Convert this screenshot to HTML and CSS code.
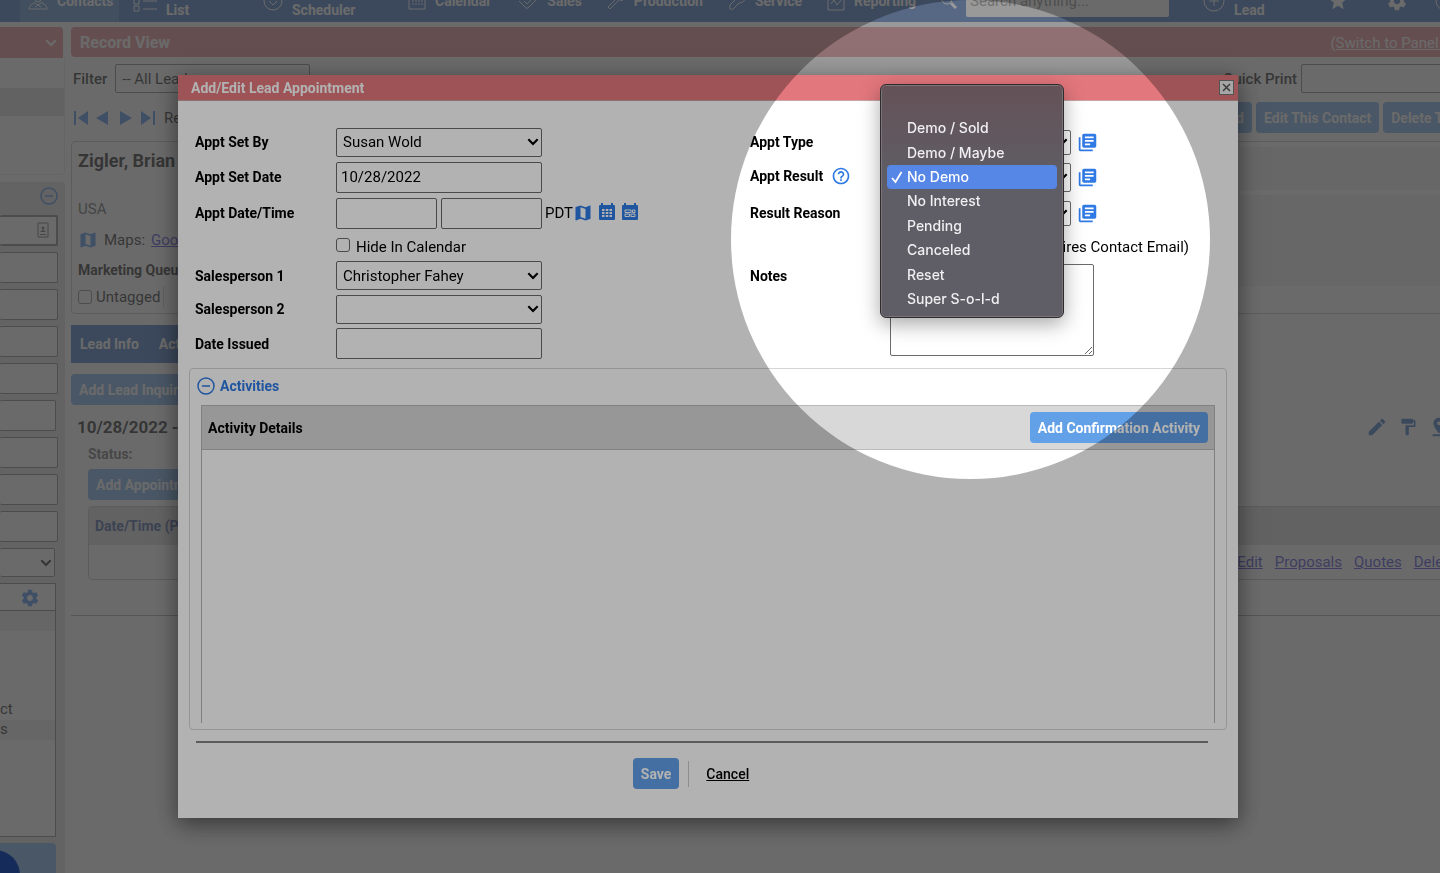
FILE: index.html
```html
<!DOCTYPE html>
<html lang="en">
<head>
  <meta charset="UTF-8">
  <meta name="viewport" content="width=device-width, initial-scale=1.0">
  <title>Record View - Add/Edit Lead Appointment</title>
  <link rel="stylesheet" href="styles.css">
</head>
<body>
  <!-- Icon sprite -->
  <svg class="sprite" aria-hidden="true">
    <symbol id="i-books" viewBox="0 0 24 24"><path d="M4 6H2v14c0 1.1.9 2 2 2h14v-2H4V6zm16-4H8c-1.1 0-2 .9-2 2v12c0 1.1.9 2 2 2h12c1.1 0 2-.9 2-2V4c0-1.1-.9-2-2-2zm-1 9H9V9h10v2zm-4 4H9v-2h6v2zm4-8H9V5h10v2z"/></symbol>
    <symbol id="i-map" viewBox="0 0 24 24"><path d="M20.5 3l-.16.03L15 5.1 9 3 3.36 4.9c-.21.07-.36.25-.36.48V20.5c0 .28.22.5.5.5l.16-.03L9 18.9l6 2.1 5.64-1.9c.21-.07.36-.25.36-.48V3.5c0-.28-.22-.5-.5-.5zM15 19l-6-2.11V5l6 2.11V19z"/></symbol>
    <symbol id="i-edit" viewBox="0 0 24 24"><path d="M3 17.25V21h3.75L17.81 9.94l-3.75-3.75L3 17.25zM20.71 7.04c.39-.39.39-1.02 0-1.41l-2.34-2.34c-.39-.39-1.02-.39-1.41 0l-1.83 1.83 3.75 3.75 1.83-1.83z"/></symbol>
    <symbol id="i-paint" viewBox="0 0 24 24"><path d="M18 4V3c0-.55-.45-1-1-1H5c-.55 0-1 .45-1 1v4c0 .55.45 1 1 1h12c.55 0 1-.45 1-1V6h1v4H9v11c0 .55.45 1 1 1h2c.55 0 1-.45 1-1v-9h8V4h-3z"/></symbol>
    <symbol id="i-pin" viewBox="0 0 24 24"><path d="M18 8c0-3.31-2.69-6-6-6S6 4.69 6 8c0 4.5 6 11 6 11s6-6.500 6-11zm-8 0c0-1.100.9-2 2-2s2 .9 2 2-.89 2-2 2-2-.9-2-2zM5 20v2h14v-2H5z"/></symbol>
    <symbol id="i-help" viewBox="0 0 24 24"><path d="M11 18h2v-2h-2v2zm1-16C6.480 2 2 6.480 2 12s4.480 10 10 10 10-4.480 10-10S17.520 2 12 2zm0 18c-4.410 0-8-3.590-8-8s3.590-8 8-8 8 3.590 8 8-3.590 8-8 8zm0-14c-2.210 0-4 1.790-4 4h2c0-1.100.9-2 2-2s2 .9 2 2c0 2-3 1.750-3 5h2c0-2.250 3-2.500 3-5 0-2.210-1.790-4-4-4z"/></symbol>
    <symbol id="i-gear" viewBox="0 0 24 24"><path d="M19.43 12.98c.04-.32.07-.64.07-.98s-.03-.66-.07-.98l2.110-1.650c.19-.15.24-.42.12-.64l-2-3.460c-.12-.22-.39-.3-.61-.22l-2.490 1c-.52-.4-1.080-.73-1.690-.98l-.38-2.650C14.460 2.180 14.250 2 14 2h-4c-.25 0-.46.18-.49.42l-.38 2.650c-.61.25-1.170.59-1.690.98l-2.490-1c-.23-.09-.49 0-.61.22l-2 3.460c-.13.22-.07.49.12.64l2.110 1.650c-.04.32-.07.65-.07.98s.03.66.07.98l-2.110 1.650c-.19.15-.24.42-.12.64l2 3.460c.12.22.39.3.61.22l2.490-1c.52.4 1.080.73 1.690.98l.38 2.650c.03.24.24.42.49.42h4c.25 0 .46-.18.49-.42l.38-2.650c.61-.25 1.170-.59 1.690-.98l2.490 1c.23.09.49 0 .61-.22l2-3.460c.12-.22.07-.49-.12-.64l-2.110-1.650zM12 15.500c-1.930 0-3.500-1.570-3.500-3.500s1.570-3.500 3.500-3.500 3.500 1.570 3.500 3.500-1.570 3.500-3.500 3.500z"/></symbol>
    <symbol id="i-star" viewBox="0 0 24 24"><path d="M12 17.27L18.18 21l-1.640-7.030L22 9.240l-7.190-.61L12 2 9.190 8.630 2 9.240l5.460 4.730L5.820 21z"/></symbol>
    <symbol id="i-chevron" viewBox="0 0 12 12"><path d="M2.500 4L6 7.500 9.500 4" fill="none" stroke="currentColor" stroke-width="1.600"/></symbol>
    <symbol id="i-minus" viewBox="0 0 18 18"><path d="M5 9h8M9 1a8 8 0 1 0 0 16 8 8 0 1 0 0-16z" fill="none" stroke="currentColor" stroke-width="1.500"/></symbol>
    <symbol id="i-cal" viewBox="0 0 18 18"><path fill-rule="evenodd" d="M3 2V0h2v2h8V0h2v2h1q1 0 1 1v13q0 1-1 1H2q-1 0-1-1V3q0-1 1-1zM4 6v2h2.500V6zm3.800 0v2h2.500V6zm3.700 0v2H14V6zM4 9v2h2.500V9zm3.800 0v2h2.500V9zm3.700 0v2H14V9zM4 12v2h2.500v-2zm3.800 0v2h2.500v-2zm3.700 0v2H14v-2z"/></symbol>
    <symbol id="i-agenda" viewBox="0 0 18 18"><path fill-rule="evenodd" d="M3 2V0h2v2h8V0h2v2h1q1 0 1 1v13q0 1-1 1H2q-1 0-1-1V3q0-1 1-1z"/><path d="M4 7h6v2.500H4zM11.500 7H14v2.500h-2.500zM4 11h4.500v2.500H4zM10 11h4v2.500h-4z" fill="none" stroke="#fff"/></symbol>
    <symbol id="i-check" viewBox="0 0 12 14"><path d="M1 8l3.500 4L10.500 2" fill="none" stroke="currentColor" stroke-width="1.800"/></symbol>
  </svg>

  <div class="app">
    <header class="topnav">
      <div class="logo">G</div>
      <nav class="nav-items">
        <a href="#" class="nav-item active">
          <svg width="20" height="20" viewBox="0 0 20 20"><path d="M7 2v5q0 4 3 4t3-4V2M7 11l-4 3q-2 1-2 4h18q0-3-2-4l-4-3M7 12l6 4M13 12l-6 4"/></svg>Contacts</a>
        <a href="#" class="nav-item two-line list">
          <svg width="24" height="24" viewBox="0 0 24 24"><path d="M1 1h5v5H1zM1 10h5v5H1zM1 17h5v5H1zM10 4h14M10 12h14M10 20h14"/></svg><span>List</span></a>
        <a href="#" class="nav-item two-line scheduler">
          <svg width="20" height="20" viewBox="0 0 20 20"><circle cx="10" cy="10" r="9"/><path d="M6 10l4 4 4-4"/></svg><span>Scheduler</span></a>
        <a href="#" class="nav-item">
          <svg width="18" height="18" viewBox="0 0 18 18"><path d="M1 2h16v15H1z"/><path d="M5 5v9M8 5v9M11 5v9M14 5v9" stroke-dasharray="2 1"/></svg>Calendar</a>
        <a href="#" class="nav-item">
          <svg width="22" height="18" viewBox="0 0 22 18"><path d="M1 6l4-4 6 2 6-2 4 5-9 9q-2 1-3-1L3 9M8 9l3 3 5-5"/></svg>Sales</a>
        <a href="#" class="nav-item">
          <svg width="18" height="18" viewBox="0 0 18 18"><path d="M1 15L11 5l2 2L3 17zM9 3l4-2 4 6-3 2z"/></svg>Production</a>
        <a href="#" class="nav-item">
          <svg width="18" height="18" viewBox="0 0 18 18"><path d="M2 13l7-7q0-5 6-5l-3 4 2 2 3-2q0 6-6 6l-6 6q-2 1-3 0t0-3z"/></svg>Service</a>
        <a href="#" class="nav-item">
          <svg width="18" height="20" viewBox="0 0 18 20"><path d="M1 3h16v16H1zM4 13l3-4 3 5 5-6"/></svg>Reporting</a>
        <span class="search">
          <svg width="16" height="16" viewBox="0 0 16 16"><circle cx="6" cy="6" r="5"/><path d="M10 10l5 5" stroke-width="3"/></svg>
          <input type="text" placeholder="Search anything..." aria-label="Search anything">
        </span>
        <a href="#" class="nav-item two-line lead">
          <svg width="22" height="22" viewBox="0 0 22 22"><circle cx="11" cy="11" r="10"/><path d="M6 11h10M11 6v10"/></svg><span>Lead</span></a>
        <a href="#" class="nav-item solid" aria-label="Favorites"><svg width="22" height="22"><use href="#i-star"/></svg></a>
        <a href="#" class="nav-item solid settings" aria-label="Settings"><svg width="22" height="22"><use href="#i-gear"/></svg></a>
        <a href="#" class="nav-item" aria-label="Support"><svg width="20" height="20" viewBox="0 0 20 20"><circle cx="10" cy="10" r="9"/></svg></a>
      </nav>
    </header>

    <div class="workspace">
      <aside class="sidebar">
        <div class="side-title"><svg width="16" height="16"><use href="#i-chevron"/></svg></div>
        <div class="side-rows">
          <div class="side-row"></div>
          <div class="side-row dark"></div>
        </div>
        <div class="side-form">
          <div class="side-head"><svg width="18" height="18"><use href="#i-minus"/></svg></div>
          <div class="side-first">
            <input type="text" aria-label="Name">
            <svg width="12" height="16" viewBox="0 0 12 16"><path d="M1 1h10v14H1z" fill="none" stroke="currentColor"/><circle cx="6" cy="6" r="1.500"/><path d="M3 10q3-4 6 0zM3 12h6v1H3z"/></svg>
          </div>
          <input type="text" aria-label="Phone">
          <input type="text" aria-label="Email">
          <input type="text" aria-label="Address">
          <input type="text" aria-label="City">
          <input type="text" class="short" aria-label="State">
          <input type="text" aria-label="Zip">
          <input type="text" aria-label="Job">
          <input type="text" aria-label="Source">
          <span class="select side-select"><select aria-label="Status"><option></option></select><svg width="16" height="16"><use href="#i-chevron"/></svg></span>
          <div class="side-list">
            <div class="side-list-head"><svg width="20" height="20"><use href="#i-gear"/></svg></div>
            <div class="line dark"></div>
            <div class="line"></div>
            <div class="line"></div>
            <div class="line"></div>
            <div class="line">ct</div>
            <div class="line dark">s</div>
          </div>
          <button type="button" class="side-button" aria-label="Search"></button>
        </div>
      </aside>

      <main class="record">
        <div class="record-title">
          <h1>Record View</h1>
          <a href="#">(Switch to Panel View)</a>
        </div>
        <div class="filter-row">
          <label for="filter">Filter</label>
          <span class="select filter-select"><select id="filter"><option>-- All Leads --</option></select></span>
          <label for="quick-print" class="push">Quick Print</label>
          <input type="text" id="quick-print">
        </div>
        <div class="toolbar">
          <svg class="pager" width="82" height="16" viewBox="0 0 82 16"><path d="M0 1h2v14H0zM14 1v14L4 8zM34 1v14L22 8zM46 1v14l12-7zM67 1v14l10-7zM79 1h2v14h-2z"/></svg>
          <span>Record</span>
          <button type="button" class="btn push">Add</button>
          <button type="button" class="btn">Edit This Contact</button>
          <button type="button" class="btn">Delete This</button>
        </div>

        <section class="contact-card">
          <div class="contact-info">
            <h2>Zigler, Brian</h2>
            <p class="country">USA</p>
            <p class="maps"><svg width="20" height="20"><use href="#i-map"/></svg>Maps: <a href="#">Google</a></p>
            <p class="queue">Marketing Queue</p>
            <label class="untagged"><input type="checkbox">Untagged</label>
          </div>
          <div class="contact-side">
            <div class="band"></div>
            <div class="band tall"></div>
          </div>
        </section>

        <div class="tabs"><a href="#">Lead Info</a><a href="#">Activities</a></div>
        <button type="button" class="btn">Add Lead Inquiry</button>
        <div class="lead-head">
          <h2>10/28/2022 -</h2>
          <span class="lead-tools">
            <svg width="22" height="22"><use href="#i-edit"/></svg>
            <svg width="20" height="20"><use href="#i-paint"/></svg>
            <svg width="22" height="22"><use href="#i-pin"/></svg>
          </span>
        </div>
        <div class="lead-body">
          <p>Status:</p>
          <button type="button" class="btn">Add Appointment</button>
          <table class="appts">
            <thead><tr><th>Date/Time (PDT)</th><th></th></tr></thead>
            <tbody><tr><td></td><td class="links"><a href="#">Edit</a><a href="#">Proposals</a><a href="#">Quotes</a><a href="#">Delete</a></td></tr></tbody>
          </table>
        </div>
      </main>
    </div>
  </div>

  <!-- Appointment dialog -->
  <div class="overlay">
    <div class="dialog" role="dialog" aria-labelledby="dialog-title">
      <div class="dialog-title">
        <h2 id="dialog-title">Add/Edit Lead Appointment</h2>
        <button type="button" class="close" aria-label="Close"><svg width="9" height="9" viewBox="0 0 9 9"><path d="M1 1l7 7M8 1L1 8" stroke="currentColor" stroke-width="1.500"/></svg></button>
      </div>
      <form>
        <div class="fields">
          <label for="set-by">Appt Set By</label>
          <div class="cell"><span class="select"><select id="set-by"><option>Susan Wold</option></select><svg width="16" height="16"><use href="#i-chevron"/></svg></span></div>
          <label for="appt-type">Appt Type</label>
          <div class="cell"><span class="select small"><select id="appt-type"><option></option></select><svg width="16" height="16"><use href="#i-chevron"/></svg></span><svg class="icon books" width="21" height="21"><use href="#i-books"/></svg></div>

          <label for="set-date">Appt Set Date</label>
          <div class="cell"><input type="text" id="set-date" value="10/28/2022"></div>
          <div class="label-help"><label for="appt-result">Appt Result</label><svg class="icon" width="20" height="20"><use href="#i-help"/></svg></div>
          <div class="cell result">
            <span class="select small tall"><select id="appt-result"><option></option></select><svg width="16" height="16"><use href="#i-chevron"/></svg></span><svg class="icon books" width="21" height="21"><use href="#i-books"/></svg>
            <ul class="menu" role="listbox" aria-label="Appt Result">
              <li role="option"></li>
              <li role="option">Demo / Sold</li>
              <li role="option">Demo / Maybe</li>
              <li role="option" class="selected" aria-selected="true"><svg width="12" height="14"><use href="#i-check"/></svg>No Demo</li>
              <li role="option">No Interest</li>
              <li role="option">Pending</li>
              <li role="option">Canceled</li>
              <li role="option">Reset</li>
              <li role="option">Super S-o-l-d</li>
            </ul>
          </div>

          <label for="appt-date">Appt Date/Time</label>
          <div class="cell">
            <span class="date-pair"><input type="text" id="appt-date"><input type="text" aria-label="Appt time"></span>
            <span class="zone">PDT</span>
            <span class="date-icons">
              <svg class="icon" width="20" height="20"><use href="#i-map"/></svg>
              <svg class="icon" width="18" height="18"><use href="#i-cal"/></svg>
              <svg class="icon" width="18" height="18"><use href="#i-agenda"/></svg>
            </span>
          </div>
          <label for="reason">Result Reason</label>
          <div class="cell"><span class="select small"><select id="reason"><option></option></select><svg width="16" height="16"><use href="#i-chevron"/></svg></span><svg class="icon books" width="21" height="21"><use href="#i-books"/></svg></div>

          <span></span>
          <div class="cell"><label class="check"><input type="checkbox">Hide In Calendar</label></div>
          <span></span>
          <div class="cell"><label class="check"><input type="checkbox">Send Appt Email (Requires Contact Email)</label></div>

          <label for="sales-1">Salesperson 1</label>
          <div class="cell"><span class="select"><select id="sales-1"><option>Christopher Fahey</option></select><svg width="16" height="16"><use href="#i-chevron"/></svg></span></div>
          <label for="notes">Notes</label>
          <div class="cell notes"><textarea id="notes"></textarea></div>

          <label for="sales-2">Salesperson 2</label>
          <div class="cell"><span class="select"><select id="sales-2"><option></option></select><svg width="16" height="16"><use href="#i-chevron"/></svg></span></div>

          <label for="issued" class="first-col">Date Issued</label>
          <div class="cell"><input type="text" id="issued"></div>
        </div>

        <section class="activities">
          <h3><svg width="18" height="18"><use href="#i-minus"/></svg>Activities</h3>
          <div class="details">
            <div class="details-head">
              <span>Activity Details</span>
              <button type="button" class="btn">Add Confirmation Activity</button>
            </div>
          </div>
        </section>

        <div class="actions">
          <button type="submit" class="btn">Save</button>
          <a href="#">Cancel</a>
        </div>
      </form>
    </div>
  </div>

  <button type="button" class="chat" aria-label="Chat"></button>
  <div class="spotlight"></div>
</body>
</html>
```
FILE: styles.css
```css
* {
  box-sizing: border-box;
}
body {
  margin: 0;
  height: 100vh;
  overflow: hidden;
  background: #fff;
  color: #000;
  font-family: Roboto, "Liberation Sans", sans-serif;
  font-size: 15px;
  line-height: 18px;
}
h1, h2, h3, p, ul {
  margin: 0;
  padding: 0;
}
input, select, textarea, button {
  font: inherit;
  color: inherit;
}
input[type="text"], select, textarea {
  display: block;
  width: 100%;
  background: transparent;
  border: 1px solid #6b6b6b;
  border-radius: 2px;
}
input[type="text"] {
  height: 31px;
  padding: 0 4px;
}
input[type="checkbox"] {
  appearance: none;
  width: 14px;
  height: 14px;
  margin: 0;
  border: 1px solid #6b6b6b;
  border-radius: 3px;
}
svg {
  flex: none;
  fill: currentColor;
}
.sprite {
  position: absolute;
  width: 0;
  height: 0;
}
.icon {
  color: #2f7ae5;
}
.push {
  margin-left: auto;
}
.btn {
  height: 31px;
  padding: 0 8px;
  border: 0;
  border-radius: 4px;
  background: #62a0e8;
  color: #fff;
  font-size: 14px;
  font-weight: 700;
  white-space: nowrap;
}
.select {
  position: relative;
  display: block;
  width: 206px;
}
.select select {
  appearance: none;
  height: 29px;
  padding: 0 20px 0 6px;
}
.select svg {
  position: absolute;
  right: 1px;
  top: 50%;
  margin-top: -8px;
  pointer-events: none;
}

/* Top navigation, scrolled partly out of view */
.topnav {
  display: flex;
  height: 48px;
  margin-top: -26px;
  background: #215db7;
  color: #fff;
  font-size: 14px;
  font-weight: 700;
}
.logo {
  width: 10px;
  padding-top: 27px;
  background: #fff;
  color: #26417a;
  font-size: 20px;
  font-style: italic;
  font-weight: 400;
  text-indent: -9px;
  overflow: hidden;
}
.nav-items {
  display: flex;
  flex: 1;
  align-items: center;
  gap: 25px;
  padding: 6px 0 0 11px;
}
.nav-item {
  display: flex;
  flex: none;
  align-items: center;
  gap: 9px;
  color: inherit;
  text-decoration: none;
}
.nav-item svg, .search svg {
  fill: none;
  stroke: currentColor;
  stroke-width: 1;
}
.nav-item.solid svg {
  fill: currentColor;
  stroke: none;
}
.nav-item.active {
  height: 48px;
  width: 99px;
  margin: -6px -11px 0 9px;
  padding: 6px 8px 0;
  background: #3b78c9;
}
.two-line span {
  padding-top: 18px;
}
.list span {
  width: 72px;
}
.scheduler span {
  width: 91px;
}
.lead {
  margin-left: 9px;
}
.lead span {
  width: 68px;
}
.settings {
  margin: 0 2px 0 12px;
}
.search {
  display: flex;
  align-items: center;
  gap: 9px;
}
.search input[type="text"] {
  width: 203px;
  background: #fff;
  border: 0;
  font-size: 15px;
  font-weight: 400;
}

/* Page behind the dialog */
.workspace {
  display: flex;
  gap: 6px;
}
.sidebar {
  flex: none;
  width: 65px;
  padding-top: 5px;
}
.side-title {
  display: flex;
  align-items: center;
  justify-content: flex-end;
  width: 63px;
  height: 31px;
  padding-right: 4px;
  background: #e2777d;
  border-radius: 0 4px 0 0;
  color: #fff;
}
.side-rows {
  height: 117px;
  border: solid #e4e4e4;
  border-width: 0 1px 1px 0;
  border-radius: 0 0 4px 0;
}
.side-row {
  height: 30px;
}
.side-row.dark {
  height: 28px;
  background: #d6d6d6;
}
.side-form {
  display: flex;
  flex-direction: column;
  gap: 6px;
  margin-top: 7px;
  padding-right: 7px;
  background: #dadada;
  border-radius: 0 4px 0 0;
}
.side-form input[type="text"], .side-select, .side-list {
  border-left: 0;
  background: #fff;
}
.side-form input.short {
  width: 56px;
}
.side-head {
  display: flex;
  align-items: center;
  justify-content: flex-end;
  height: 27px;
  color: #2f7ae5;
}
.side-first {
  position: relative;
}
.side-first input[type="text"] {
  border-width: 2px;
}
.side-first svg {
  position: absolute;
  right: 9px;
  top: 7px;
  color: #555;
}
.side-select {
  width: 55px;
}
.side-select select {
  border-left: 0;
}
.side-list {
  width: 56px;
  height: 254px;
  border: 1px solid #6b6b6b;
  border-left: 0;
}
.side-list-head {
  height: 27px;
  padding: 4px 0 0 20px;
  border-bottom: 1px solid #6b6b6b;
  color: #2f7ae5;
}
.line {
  height: 20px;
}
.line.dark {
  background: #e8e8e8;
}
.line:nth-child(5) {
  margin-top: 9px;
}
.side-button {
  width: 56px;
  height: 36px;
  border: 0;
  border-radius: 0 4px 4px 0;
  background: #62a0e8;
}
.record {
  flex: 1;
  min-width: 0;
  margin-right: -48px;
  padding-top: 5px;
}
.record-title {
  display: flex;
  align-items: center;
  justify-content: space-between;
  height: 30px;
  padding: 1px 8px 0 9px;
  background: #e2777d;
  border-radius: 4px;
  color: #fff;
}
.record-title h1 {
  font-size: 16px;
  font-weight: 700;
}
.record-title a {
  color: inherit;
}
.filter-row {
  display: flex;
  align-items: center;
  margin-top: 7px;
  padding-left: 2px;
}
.filter-row label {
  font-weight: 500;
}
.filter-select {
  width: 195px;
  margin-left: 8px;
}
.filter-row input[type="text"] {
  width: 187px;
  height: 29px;
  margin-left: 4px;
}
.toolbar {
  display: flex;
  align-items: center;
  gap: 4px;
  margin-top: 9px;
  padding: 0 18px 0 3px;
}
.toolbar span {
  margin-left: 4px;
}
.pager {
  color: #2f7ae5;
}
.contact-card {
  display: flex;
  height: 173px;
  margin-top: 8px;
  border: 1px solid #bbb;
  border-radius: 4px;
}
.contact-info {
  width: 400px;
  padding: 9px 6px 0;
}
.contact-info h2 {
  font-size: 18px;
  font-weight: 700;
  line-height: 20px;
}
.country {
  margin-top: 29px;
  color: #444;
}
.maps {
  display: flex;
  align-items: center;
  gap: 6px;
  height: 20px;
  margin-top: 12px;
}
.maps svg {
  color: #2f7ae5;
}
.maps a, .links a {
  color: #2a1fd0;
}
.queue {
  margin-top: 11px;
  font-size: 14px;
  font-weight: 700;
}
.untagged {
  display: inline-flex;
  align-items: center;
  gap: 4px;
  height: 22px;
  margin-top: 7px;
  padding-right: 3px;
  border-right: 1px solid #ccc;
}
.contact-side {
  flex: 1;
  padding-top: 5px;
}
.band {
  height: 43px;
  margin-bottom: 5px;
  background: #efefef;
}
.band.tall {
  height: 91px;
}
.tabs {
  display: flex;
  gap: 20px;
  width: 600px;
  height: 38px;
  margin: 11px 0;
  padding: 10px 9px;
  background: #215db7;
  font-size: 14px;
  font-weight: 700;
}
.tabs a {
  color: #fff;
  text-decoration: none;
}
.lead-head {
  display: flex;
  align-items: center;
  justify-content: space-between;
  height: 36px;
  margin-top: 4px;
  padding: 0 38px 0 6px;
}
.lead-head h2 {
  font-size: 17px;
  font-weight: 700;
}
.lead-tools {
  display: flex;
  align-items: center;
  gap: 10px;
  color: #1c5fc0;
}
.lead-body {
  padding: 0 0 35px 17px;
  border-bottom: 1px solid #999;
  color: #333;
}
.lead-body p {
  margin-bottom: 6px;
  color: #555;
  font-size: 14px;
  font-weight: 700;
}
.appts {
  width: 100%;
  margin-top: 6px;
  border: 1px solid #bbb;
  border-radius: 4px;
  border-spacing: 0;
}
.appts th {
  height: 38px;
  padding: 0 6px;
  background: #d8d8d8;
  color: #1d3f8a;
  font-size: 14px;
  font-weight: 700;
  text-align: left;
}
.appts td {
  height: 34px;
  padding: 0 31px 0 0;
}
.appts .links {
  text-align: right;
}
.links a {
  margin-left: 12px;
}

/* Dialog */
.overlay {
  position: fixed;
  inset: 0;
  padding: 75px 202px 0 178px;
  background: rgba(109, 109, 109, 0.7);
}
.dialog {
  background: #fff;
  box-shadow: 0 6px 22px rgba(0, 0, 0, 0.5);
}
.dialog-title {
  display: flex;
  align-items: center;
  justify-content: space-between;
  height: 26px;
  padding: 0 4px 0 13px;
  background: #e2777d;
  border-bottom: 1px solid #c9a3a5;
  color: #fff;
}
.dialog-title h2 {
  font-size: 14px;
  font-weight: 700;
}
.close {
  display: flex;
  align-items: center;
  justify-content: center;
  width: 15px;
  height: 15px;
  padding: 0;
  border: 1px solid #777;
  background: #eee;
  color: #555;
}
.fields {
  display: grid;
  grid-template-columns: 141px 414fr 140px 348fr;
  grid-template-rows: 34px 36px 36px 28px 33px 34px 35px;
  align-items: center;
  padding: 24px 0 0 17px;
}
.fields > label, .label-help label {
  font-size: 14px;
  font-weight: 700;
}
.label-help {
  display: flex;
  align-items: center;
  gap: 8px;
  padding-bottom: 3px;
}
.cell {
  display: flex;
  align-items: center;
}
.cell > input[type="text"] {
  width: 206px;
}
.select.small {
  width: 181px;
}
.select.small select {
  height: 25px;
}
.select.tall select {
  height: 29px;
}
.books {
  margin-left: 6px;
}
.date-pair {
  display: flex;
  gap: 4px;
  width: 206px;
}
.zone {
  margin-left: 3px;
}
.date-icons {
  display: flex;
  gap: 5px;
}
.check {
  display: flex;
  align-items: center;
  gap: 6px;
  padding-top: 4px;
  white-space: nowrap;
}
.check input {
  margin-bottom: 4px;
}
.notes {
  grid-row: 5 / 8;
  grid-column: 4;
  align-self: end;
  margin-bottom: 5px;
}
.notes textarea {
  width: 204px;
  height: 92px;
}
.first-col {
  grid-column: 1;
}
.result {
  position: relative;
}
.menu {
  position: absolute;
  left: -10px;
  top: -79px;
  z-index: 2;
  display: grid;
  grid-auto-rows: 1fr;
  width: 184px;
  height: 234px;
  padding: 7px 6px 5px;
  border: 1px solid #2f2a2d;
  border-radius: 6px;
  background: linear-gradient(#645257, #5f5d65 40%);
  box-shadow: inset 0 0 0 1px #7b7479, 0 6px 20px rgba(0, 0, 0, 0.35);
  color: #f0eff1;
  font-family: Inter, sans-serif;
  font-size: 14px;
  font-weight: 500;
  list-style: none;
}
.menu li {
  display: flex;
  align-items: center;
  padding-left: 20px;
  border-radius: 4px;
}
.menu .selected {
  gap: 4px;
  padding-left: 4px;
  background: #5686e6;
  color: #fff;
}
.activities {
  margin: 7px 11px 0;
  padding: 7px 11px 6px;
  border: 1px solid #d5d5d5;
  border-radius: 4px;
}
.activities h3 {
  display: flex;
  align-items: center;
  gap: 5px;
  margin: 0 0 9px -4px;
  color: #2f7ae5;
  font-size: 14px;
  font-weight: 700;
  line-height: 20px;
}
.details {
  height: 318px;
  border: solid #b8b8b8;
  border-width: 1px 1px 0;
}
.details-head {
  display: flex;
  align-items: center;
  justify-content: space-between;
  height: 44px;
  padding: 0 6px;
  background: #d8d8d8;
  border-bottom: 1px solid #bbb;
  font-size: 14px;
  font-weight: 700;
}
.actions {
  display: flex;
  align-items: center;
  justify-content: center;
  gap: 9px;
  margin: 11px 30px 0 18px;
  padding: 15px 22px 29px 0;
  border-top: 2px solid #858585;
}
.actions a {
  padding: 4px 0 4px 17px;
  border-left: 1px solid #ccc;
  color: #000;
  font-size: 14px;
  font-weight: 500;
}

/* Floating layers */
.chat {
  position: fixed;
  left: -30px;
  bottom: -27px;
  width: 50px;
  height: 50px;
  border: 0;
  border-radius: 50%;
  background: #1f4083;
}
.spotlight {
  position: fixed;
  left: 731px;
  top: 0;
  z-index: 5;
  width: 479px;
  height: 479px;
  border-radius: 50%;
  box-shadow: 0 0 0 2000px rgba(0, 0, 0, 0.3);
  pointer-events: none;
}
```
